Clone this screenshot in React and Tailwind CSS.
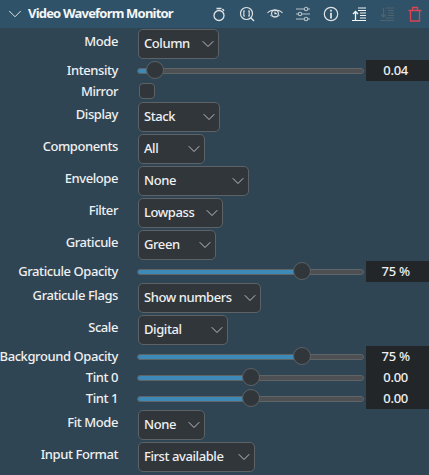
import { ChevronDown } from 'lucide-react'

function Row({ label, tall, h, children }) {
  return (
    <div className={`flex items-center ${tall ? 'h-[32px]' : h === 20 ? 'h-[20px]' : 'h-[21px]'}`}>
      <div className={`w-[118px] shrink-0 text-[13px] font-medium leading-none tracking-[-0.42px] whitespace-nowrap text-[#eff0f1] flex justify-end ${tall ? 'pb-[5px]' : ''}`}>
        {label}
      </div>
      {children}
    </div>
  )
}

function Select({ label, value, width }) {
  return (
    <Row label={label} tall>
      <div
        className="ml-[20px] h-[30px] flex items-center justify-between pl-[5px] rounded-[5px] border border-[#5c6266] bg-[#31363b] text-[13px] font-medium tracking-[-0.42px] text-[#eff0f1]"
        style={{ width }}
      >
        <span>{value}</span>
        <ChevronDown className="w-[20px] h-[20px] text-[#d8dadc]" strokeWidth={1} />
      </div>
    </Row>
  )
}

function Slider({ label, value, fill, thumb }) {
  return (
    <Row label={label}>
      <div className="ml-[19px] w-[228px] h-[21px] relative flex items-center">
        <div className="w-full h-[6px] rounded-full bg-[#4d4f52] border border-[#5f6467] overflow-hidden">
          <div className="h-full bg-[#3d8ab8]" style={{ width: fill }} />
        </div>
        <div
          className="absolute top-[1px] w-[18px] h-[18px] rounded-full bg-[#31363b] border border-[#5c6266]"
          style={{ left: thumb }}
        />
      </div>
      <div className="ml-[2px] w-[63px] h-[21px] bg-[#232629] flex items-center justify-center pr-[4px] text-[13px] font-medium tracking-[-0.3px] text-[#eff0f1]">
        {value}
      </div>
    </Row>
  )
}

function IconBtn({ children, className }) {
  return (
    <svg viewBox="0 0 16 16" fill="none" stroke="currentColor" strokeWidth="1.1" className={`w-[16px] h-[16px] ${className || 'text-[#dfe3e5]'}`}>
      {children}
    </svg>
  )
}

export default function App() {
  return (
    <div className="w-[429px] h-[475px] overflow-hidden bg-[#304553] font-['Noto_Sans',sans-serif]">
      <div className="h-[28px] bg-[#2f5268] flex items-center pl-[4px] pr-[6px]">
        <ChevronDown className="w-[22px] h-[22px] text-[#eff0f1]" strokeWidth={1} />
        <span className="ml-[2px] text-[13px] font-bold tracking-[-0.8px] text-[#f4f6f7] whitespace-nowrap">Video Waveform Monitor</span>
        <div className="ml-auto flex items-center gap-[12px]">
          <IconBtn>
            <circle cx="8" cy="9.5" r="5" strokeWidth="1.3" />
            <path d="M5.5 2.5h5M11.5 3l1.5 2" strokeWidth="1.3" />
          </IconBtn>
          <IconBtn>
            <circle cx="7.5" cy="7.5" r="6" strokeWidth="1.2" />
            <path d="M11.5 11.5l3.5 3.5" strokeWidth="1.4" />
            <path d="M6 5H4.8v5H6M9 5h1.2v5H9" />
          </IconBtn>
          <IconBtn>
            <path d="M0.5 7C4 3 12 3 15.5 7" />
            <path d="M3 9c3 2.6 7 2.6 10 0" strokeWidth="0.6" />
            <circle cx="8" cy="7.5" r="3.4" />
            <path d="M8 5.6v2h1.8" />
          </IconBtn>
          <IconBtn className="text-[#b5c2c9]">
            <path d="M1 3h8M13 3h2M1 8h2M7 8h8M1 13h8M13 13h2" />
            <circle cx="11" cy="3" r="1.7" />
            <circle cx="5" cy="8" r="1.7" />
            <circle cx="11" cy="13" r="1.7" />
          </IconBtn>
          <IconBtn>
            <circle cx="8" cy="8" r="6.7" strokeWidth="1.2" />
            <path d="M8 6.8V12.5" strokeWidth="1.8" />
            <path d="M8 3.8V5.4" strokeWidth="1.8" />
          </IconBtn>
          <IconBtn className="text-[#f2f4f5]">
            <path d="M7 2h8M7 4.5h8M9 7h6M9 9.5h6M9 12h6M1 14.5h14" />
            <path d="M4.5 14.5V6M2 8l2.5-2.5L7 8" strokeWidth="1.3" />
          </IconBtn>
          <IconBtn className="text-[#50626c]">
            <path d="M7 2h8M9 4.5h6M9 7h6M9 9.5h6M7 12h8M1 14.5h14" />
            <path d="M4.5 2v9M2 8.5L4.5 11 7 8.5" strokeWidth="1.3" />
          </IconBtn>
          <IconBtn className="text-[#da4453]">
            <path d="M1.5 4.5h13M5.5 4.5V1.5h5v3M3.5 4.5v10.5h9V4.5" strokeWidth="1.3" />
          </IconBtn>
        </div>
      </div>

      <Select label="Mode" value="Column" width={81} />
      <Slider label="Intensity" value="0.04" fill="8%" thumb={9} />
      <Row label="Mirror" h={20}>
        <div className="ml-[21px] w-[16px] h-[16px] rounded-[4px] border border-[#5c6266] bg-[#31363b]" />
      </Row>
      <Select label="Display" value="Stack" width={82} />
      <Select label="Components" value="All" width={67} />
      <Select label="Envelope" value="None" width={111} />
      <Select label="Filter" value="Lowpass" width={85} />
      <Select label="Graticule" value="Green" width={78} />
      <Slider label="Graticule Opacity" value="75 %" fill="72%" thumb={156} />
      <Select label="Graticule Flags" value="Show numbers" width={123} />
      <Select label="Scale" value="Digital" width={90} />
      <Slider label="Background Opacity" value="75 %" fill="72%" thumb={156} />
      <Slider label="Tint 0" value="0.00" fill="50%" thumb={105} />
      <Slider label="Tint 1" value="0.00" fill="50%" thumb={105} />
      <Select label="Fit Mode" value="None" width={67} />
      <Select label="Input Format" value="First available" width={117} />
    </div>
  )
}
